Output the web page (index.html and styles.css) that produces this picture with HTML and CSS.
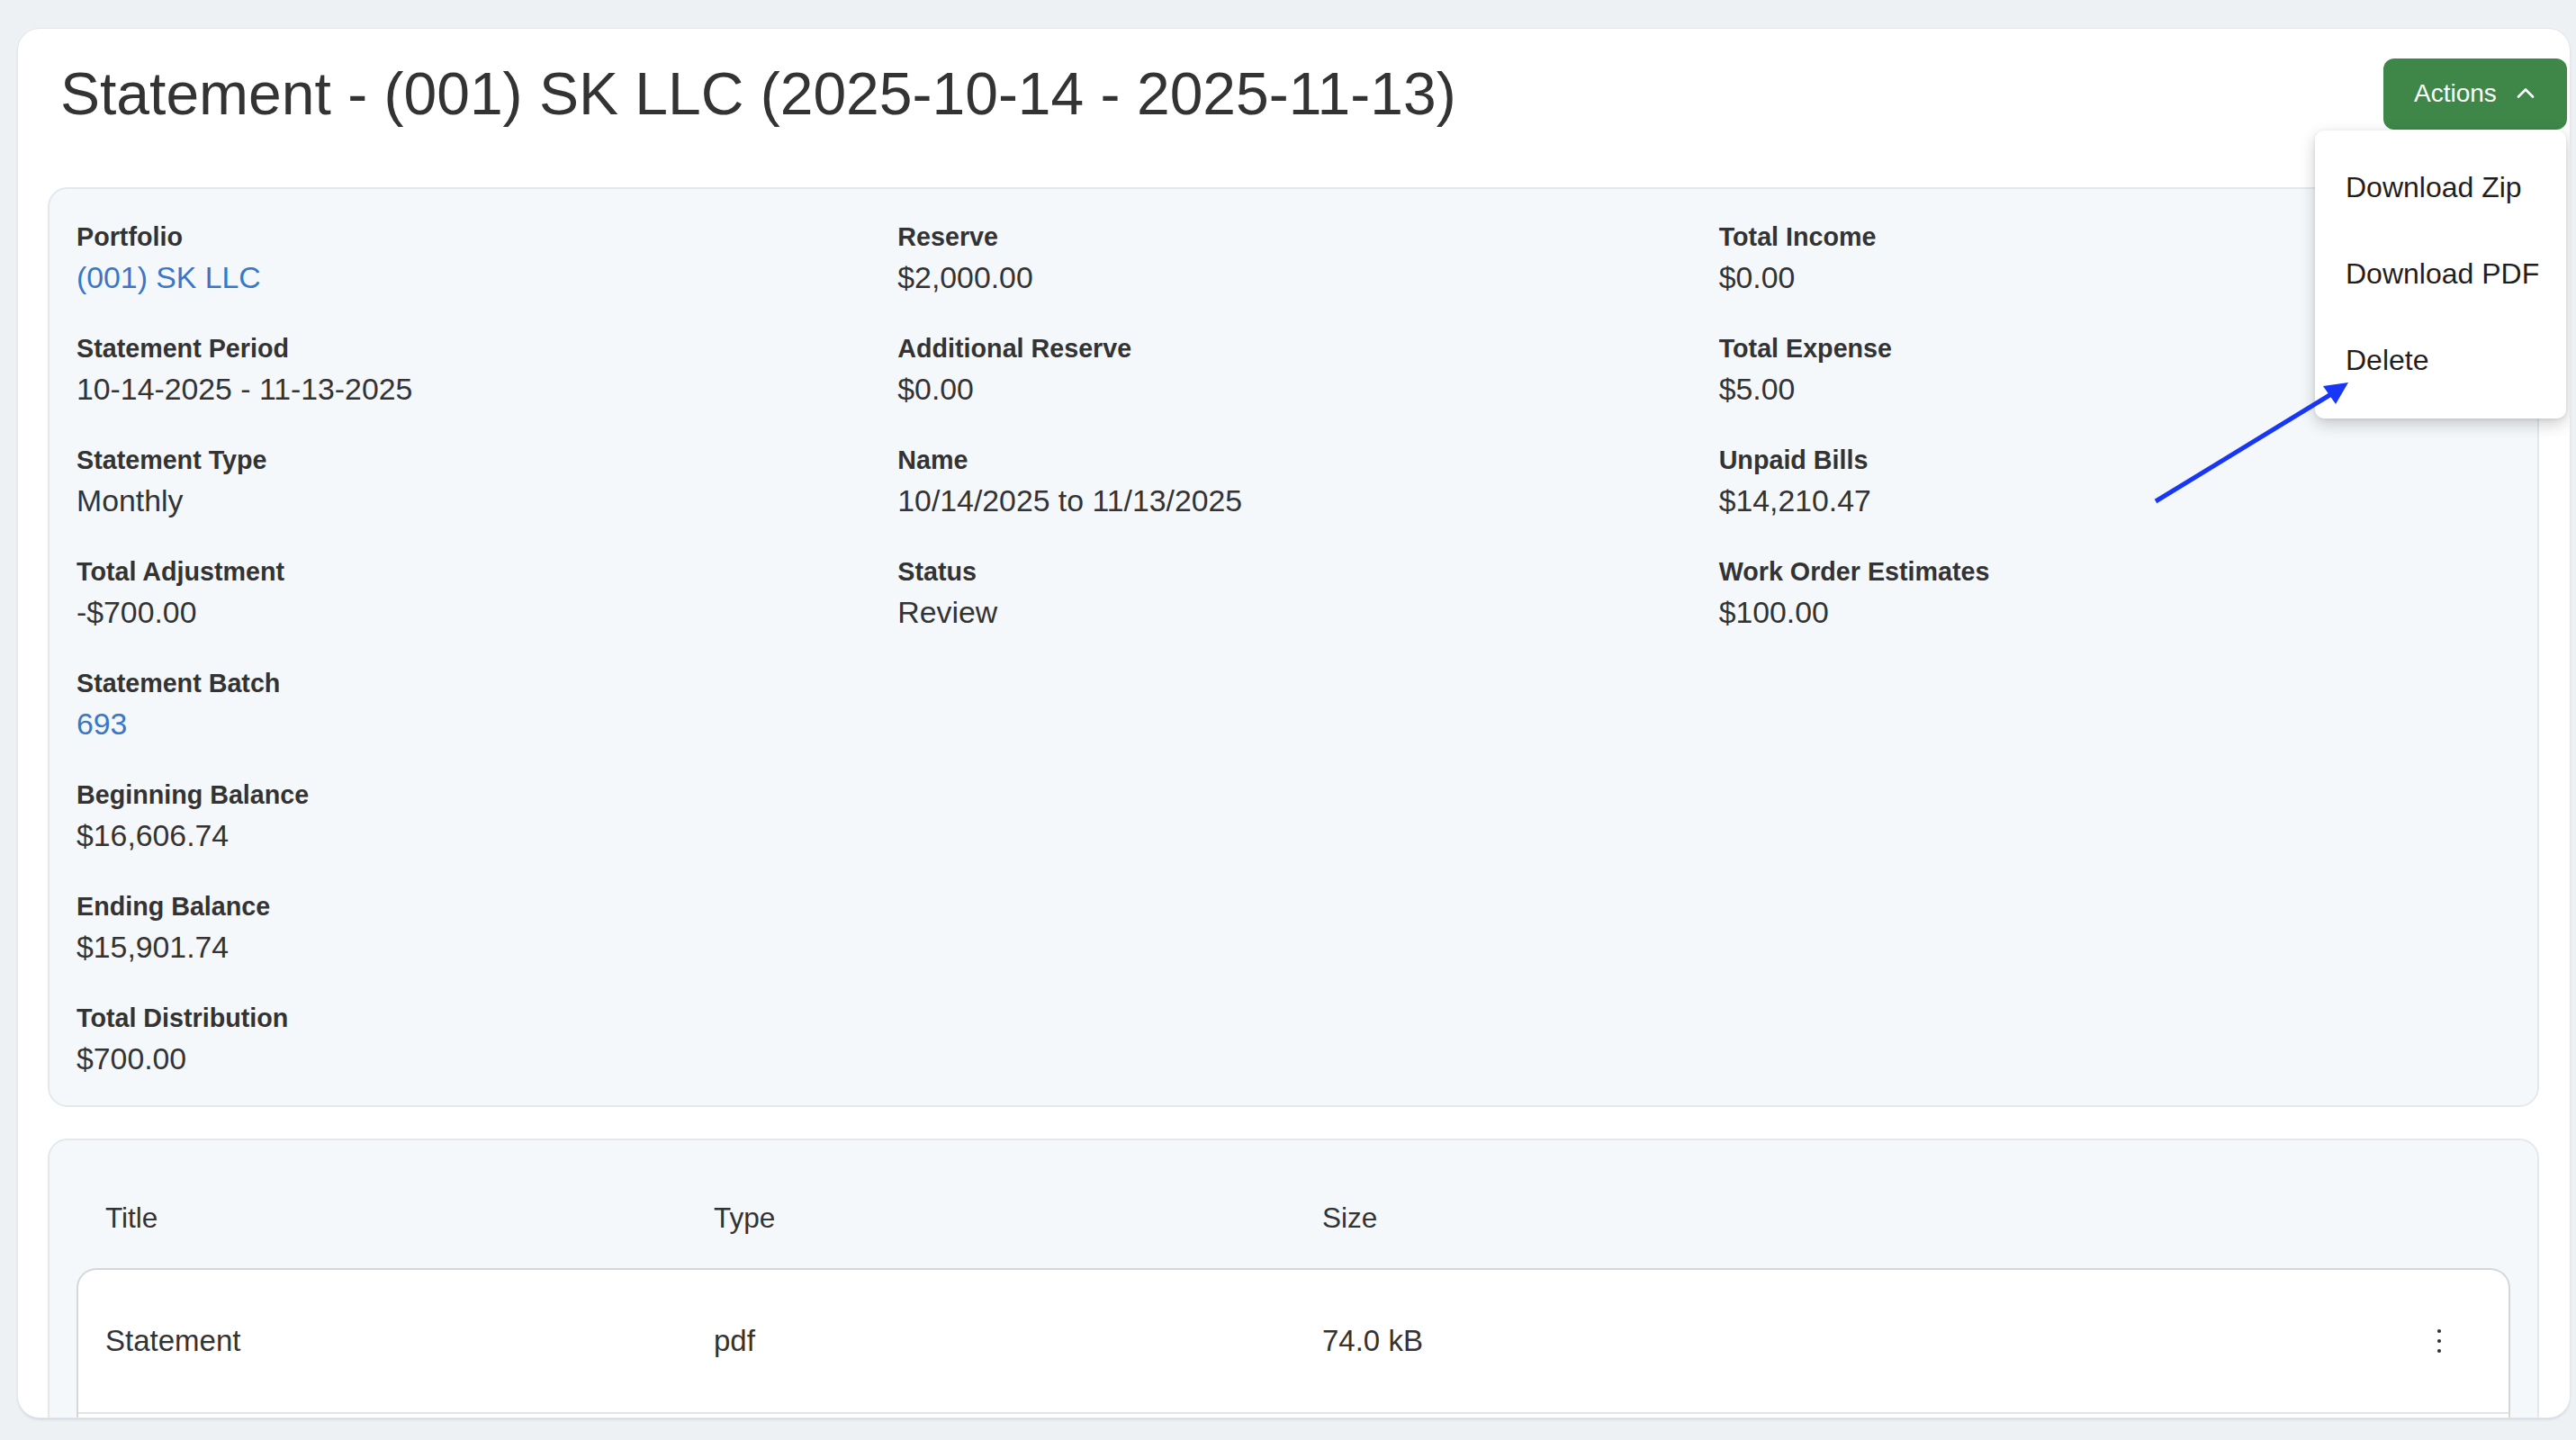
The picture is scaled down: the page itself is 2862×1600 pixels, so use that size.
FILE: index.html
```html
<!DOCTYPE html>
<html lang="en">
<head>
<meta charset="utf-8">
<title>Statement</title>
<link rel="stylesheet" href="styles.css">
</head>
<body>
<div class="page">
  <div class="card">
    <div class="header">
      <h1 class="title">Statement - (001) SK LLC (2025-10-14 - 2025-11-13)</h1>
      <div class="actions">
        <button class="btn">
          <span>Actions</span>
          <svg class="chev" width="20" height="12" viewBox="0 0 20 12"><path d="M2 10.5 L10 2.5 L18 10.5" fill="none" stroke="#fff" stroke-width="2.6" stroke-linecap="round" stroke-linejoin="round"/></svg>
        </button>
        <div class="menu">
          <div class="menu-item">Download Zip</div>
          <div class="menu-item">Download PDF</div>
          <div class="menu-item">Delete</div>
        </div>
      </div>
    </div>

    <div class="panel details">
      <div class="col">
        <div class="field"><div class="label">Portfolio</div><div class="value link">(001) SK LLC</div></div>
        <div class="field"><div class="label">Statement Period</div><div class="value">10-14-2025 - 11-13-2025</div></div>
        <div class="field"><div class="label">Statement Type</div><div class="value">Monthly</div></div>
        <div class="field"><div class="label">Total Adjustment</div><div class="value">-$700.00</div></div>
        <div class="field"><div class="label">Statement Batch</div><div class="value link">693</div></div>
        <div class="field"><div class="label">Beginning Balance</div><div class="value">$16,606.74</div></div>
        <div class="field"><div class="label">Ending Balance</div><div class="value">$15,901.74</div></div>
        <div class="field"><div class="label">Total Distribution</div><div class="value">$700.00</div></div>
      </div>
      <div class="col">
        <div class="field"><div class="label">Reserve</div><div class="value">$2,000.00</div></div>
        <div class="field"><div class="label">Additional Reserve</div><div class="value">$0.00</div></div>
        <div class="field"><div class="label">Name</div><div class="value">10/14/2025 to 11/13/2025</div></div>
        <div class="field"><div class="label">Status</div><div class="value">Review</div></div>
      </div>
      <div class="col">
        <div class="field"><div class="label">Total Income</div><div class="value">$0.00</div></div>
        <div class="field"><div class="label">Total Expense</div><div class="value">$5.00</div></div>
        <div class="field"><div class="label">Unpaid Bills</div><div class="value">$14,210.47</div></div>
        <div class="field"><div class="label">Work Order Estimates</div><div class="value">$100.00</div></div>
      </div>
    </div>

    <div class="panel files">
      <div class="thead">
        <div class="th">Title</div>
        <div class="th">Type</div>
        <div class="th">Size</div>
        <div class="th"></div>
      </div>
      <div class="tbody">
        <div class="tr first">
          <div class="td">Statement</div>
          <div class="td">pdf</div>
          <div class="td">74.0 kB</div>
          <div class="td kebab">
            <svg width="8" height="30" viewBox="0 0 8 30"><circle cx="4" cy="4" r="2.1" fill="#333"/><circle cx="4" cy="15" r="2.1" fill="#333"/><circle cx="4" cy="26" r="2.1" fill="#333"/></svg>
          </div>
        </div>
        <div class="tr">
          <div class="td"></div>
          <div class="td"></div>
          <div class="td"></div>
          <div class="td"></div>
        </div>
      </div>
    </div>
  </div>
</div>

<svg class="annotation" width="2862" height="1600" viewBox="0 0 2862 1600">
  <line x1="2395" y1="557" x2="2590" y2="438" stroke="#1836f5" stroke-width="5"/>
  <polygon points="2609,425 2581,429 2595,449" fill="#1836f5"/>
</svg>
</body>
</html>
```
FILE: styles.css
```css
* { box-sizing: border-box; }

html, body {
  margin: 0;
  padding: 0;
}

body {
  background: #edf1f4;
  font-family: "Liberation Sans", Arial, Helvetica, sans-serif;
  color: #333;
  width: 2862px;
  height: 1600px;
  overflow: hidden;
  position: relative;
}

.page {
  padding: 32px 7px 0 20px;
}

.card {
  background: #fff;
  border-radius: 24px;
  height: 1543px;
  overflow: hidden;
  box-shadow: 0 0 0 1px #e3e7eb, 0 2px 3px rgba(70, 95, 130, 0.22);
  padding-top: 32px;
}

.header {
  display: flex;
  justify-content: space-between;
  align-items: center;
  height: 80px;
  padding: 0 3px 0 47px;
}

.title {
  margin: 0;
  font-size: 66px;
  line-height: 80px;
  font-weight: 400;
  color: #333;
  white-space: nowrap;
}

.actions {
  position: relative;
  z-index: 5;
}

.btn {
  display: flex;
  align-items: center;
  gap: 22px;
  width: 204px;
  height: 79px;
  padding: 0 0 0 34px;
  border: none;
  border-radius: 12px;
  background: #3e8749;
  color: #fff;
  font-family: "Liberation Sans", Arial, Helvetica, sans-serif;
  font-size: 28px;
}

.chev {
  display: block;
  margin-top: -2px;
}

.menu {
  position: absolute;
  top: 80px;
  right: 1px;
  width: 279px;
  padding: 16px 0;
  background: #fff;
  border-radius: 10px;
  box-shadow: 0 6px 18px rgba(0, 0, 0, 0.2), 0 1px 4px rgba(0, 0, 0, 0.08);
}

.menu-item {
  height: 96px;
  display: flex;
  align-items: center;
  padding-left: 34px;
  font-size: 32px;
  color: #1f1f1f;
  white-space: nowrap;
}

.panel {
  margin: 0 34px 0 33px;
  background: #f5f8fb;
  border: 2px solid #e5e8eb;
  border-radius: 22px;
}

.details {
  margin-top: 64px;
  padding: 32px 30px 28px;
  display: grid;
  grid-template-columns: repeat(3, 1fr);
  column-gap: 33px;
  align-items: start;
}

.col {
  display: flex;
  flex-direction: column;
  gap: 34px;
}

.label {
  font-size: 28.7px;
  line-height: 42px;
  font-weight: 700;
  color: #333;
}

.value {
  font-size: 33.8px;
  line-height: 48px;
  color: #333;
}

.value.link {
  color: #3a77c8;
}

.files {
  margin-top: 35px;
  padding: 30px 30px 0;
  height: 600px;
}

.thead {
  display: grid;
  grid-template-columns: 676px 676px 1fr 60px;
  height: 112px;
  align-items: center;
  padding: 0 49px 0 32px;
}

.th {
  font-size: 31.5px;
  color: #333;
}

.tbody {
  background: #fff;
  border: 2px solid #d6d7d9;
  border-bottom: none;
  border-radius: 22px 22px 0 0;
}

.tr {
  display: grid;
  grid-template-columns: 676px 676px 1fr 60px;
  align-items: center;
  height: 160px;
  padding: 0 47px 0 30px;
  border-bottom: 2px solid #e2e3e5;
}

.td {
  font-size: 33px;
  color: #333;
}

.kebab {
  display: flex;
  justify-content: center;
}

.kebab svg {
  display: block;
}

.annotation {
  position: absolute;
  left: 0;
  top: 0;
  pointer-events: none;
  z-index: 10;
}
```
